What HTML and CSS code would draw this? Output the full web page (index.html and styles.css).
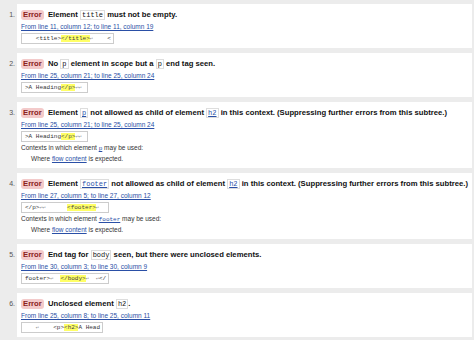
FILE: index.html
```html
<!DOCTYPE html>
<html lang="en">
<head>
    <meta charset="UTF-8" />
    <title>Validation results</title>
    <link rel="stylesheet" href="styles.css">
</head>
<body>
<ol class="results">
    <li class="msg">
        <p class="msg-line"><span class="badge">Error</span> Element <code>title</code> must not be empty.</p>
        <p class="location"><a href="#l11c12">From line 11, column 12; to line 11, column 19</a></p>
        <code class="extract">   &lt;title&gt;<b>&lt;/title&gt;</b><span class="lf">↩</span>    &lt;</code>
    </li>
    <li class="msg">
        <p class="msg-line"><span class="badge">Error</span> No <code>p</code> element in scope but a <code>p</code> end tag seen.</p>
        <p class="location"><a href="#l25c21">From line 25, column 21; to line 25, column 24</a></p>
        <code class="extract">&gt;A Heading<b>&lt;/p&gt;</b><span class="lf">↩↩</span> </code>
    </li>
    <li class="msg">
        <p class="msg-line"><span class="badge">Error</span> Element <code><a href="#p">p</a></code> not allowed as child of element <code><a href="#h2">h2</a></code> in this context. (Suppressing further errors from this subtree.)</p>
        <p class="location"><a href="#l25c21b">From line 25, column 21; to line 25, column 24</a></p>
        <code class="extract">&gt;A Heading<b>&lt;/p&gt;</b><span class="lf">↩↩</span> </code>
        <p class="context">Contexts in which element <code><a href="#p">p</a></code> may be used:</p>
        <p class="context indent">Where <a href="#flow">flow content</a> is expected.</p>
    </li>
    <li class="msg">
        <p class="msg-line"><span class="badge">Error</span> Element <code><a href="#footer">footer</a></code> not allowed as child of element <code><a href="#h2">h2</a></code> in this context. (Suppressing further errors from this subtree.)</p>
        <p class="location"><a href="#l27c5">From line 27, column 5; to line 27, column 12</a></p>
        <code class="extract">&lt;/p&gt;<span class="lf">↩↩</span>      <b>&lt;footer&gt;</b><span class="lf">↩</span>  </code>
        <p class="context">Contexts in which element <code><a href="#footer">footer</a></code> may be used:</p>
        <p class="context indent">Where <a href="#flow">flow content</a> is expected.</p>
    </li>
    <li class="msg">
        <p class="msg-line"><span class="badge">Error</span> End tag for <code>body</code> seen, but there were unclosed elements.</p>
        <p class="location"><a href="#l30c3">From line 30, column 3; to line 30, column 9</a></p>
        <code class="extract">footer&gt;<span class="lf">↩</span>  <b>&lt;/body&gt;</b><span class="lf">↩</span>  <span class="lf">↩</span>&lt;/</code>
    </li>
    <li class="msg">
        <p class="msg-line"><span class="badge">Error</span> Unclosed element <code>h2</code>.</p>
        <p class="location"><a href="#l25c8">From line 25, column 8; to line 25, column 11</a></p>
        <code class="extract">   <span class="lf">↩</span>    &lt;p&gt;<b>&lt;h2&gt;</b>A Head</code>
    </li>
</ol>
</body>
</html>
```

FILE: styles.css
```css
html, body { margin: 0; padding: 0; }
body {
    background: #ececec;
    font-family: "Liberation Sans", Arial, sans-serif;
    color: #222;
    overflow: hidden;
}
a { color: #2a4fa6; }

.results { margin: 0; padding: 4px 2px 0 17px; list-style: decimal outside; }
.msg { background: #fff; padding: 4px 2px 4px 4px; margin-bottom: 5px; font-size: 7px; }
.msg::marker { font-size: 7px; color: #555; }

.msg-line {
    margin: 0; height: 14px; font-size: 7.7px; line-height: 14px;
    font-weight: bold; color: #111; white-space: nowrap;
}
.badge {
    display: inline-block; line-height: 10px; padding: 0 2px; margin-right: 2px;
    background: #f3caca; color: #8a2121; border-radius: 3px;
}
code {
    font-family: "Liberation Mono", "DejaVu Sans Mono", monospace; font-weight: normal;
    font-size: 7px; border: 1px solid #ddd; padding: 0 1px;
}
.location { margin: 0; height: 10px; font-size: 6.5px; line-height: 10px; }

.extract {
    display: block; width: fit-content; height: 9px; white-space: pre; margin-top: 1px;
    font-size: 6px; line-height: 9px; padding: 0 2px 0 3px; border: 1px solid #ccc; color: #333;
}
.extract b { background: #ffff66; font-weight: normal; color: #444; }
.extract .lf { font-size: 5px; color: #777; }

.context { margin: 0; height: 11px; font-size: 6.5px; line-height: 11px; color: #333; }
.context code { font-size: 6px; border: none; padding: 0; }
.indent { padding-left: 10px; }
```
